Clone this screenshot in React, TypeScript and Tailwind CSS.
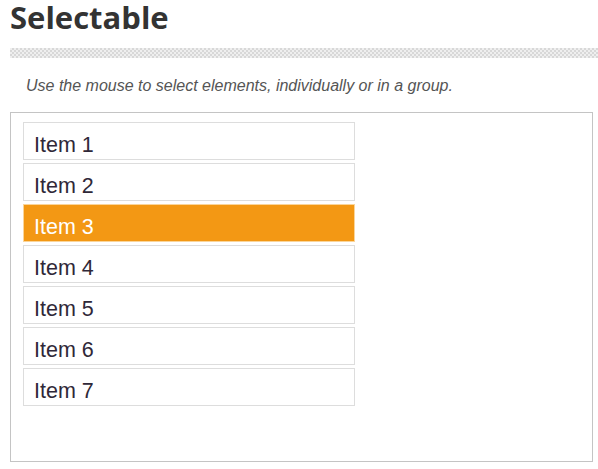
import React from "react";

const items = ["Item 1", "Item 2", "Item 3", "Item 4", "Item 5", "Item 6", "Item 7"];

export default function App() {
  return (
    <div className="w-[598px] h-[469px] bg-white overflow-hidden">
      <div className="h-[48px] pl-[10px] flex items-start">
        <h1 className="-mt-[4px] text-[31px] leading-[42px] font-bold text-[#333] [font-family:'Open_Sans',sans-serif]">
          Selectable
        </h1>
      </div>
      <div className="ml-[10px] h-[10px] bg-[repeating-conic-gradient(#d8d8d8_0_25%,#efefef_0_50%)] bg-[length:4px_4px]" />
      <p className="pl-[26px] pt-[18px] h-[54px] text-[16px] leading-[20px] italic text-[#555] [font-family:'Liberation_Sans',Arial,sans-serif]">
        Use the mouse to select elements, individually or in a group.
      </p>
      <div className="ml-[10px] w-[583px] h-[350px] border border-[#c4c4c4] pt-[6px] pl-[9px]">
        <ul className="w-[338px]">
          {items.map((it, i) => {
            const sel = i === 2;
            return (
              <li
                key={it}
                className={
                  "m-[3px] h-[38px] border pl-[10px] pt-[11px] text-[21.5px] leading-[22px] [font-family:'Liberation_Sans',Arial,sans-serif] " +
                  (sel
                    ? "bg-[#f39814] border-[#fad59a] text-white"
                    : "bg-white border-[#dddddd] text-[#2f2838]")
                }
              >
                {it}
              </li>
            );
          })}
        </ul>
      </div>
    </div>
  );
}
